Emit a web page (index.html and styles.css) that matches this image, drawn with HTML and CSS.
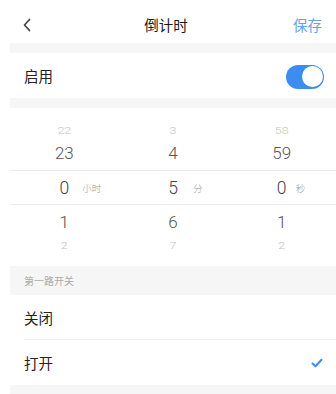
FILE: index.html
```html
<!DOCTYPE html>
<html lang="zh">
<head>
<meta charset="utf-8">
<link rel="stylesheet" href="styles.css">
</head>
<body>
<div class="page">
  <header class="nav">
    <span class="back"><svg width="10" height="14" viewBox="0 0 10 14"><polyline points="7.5,1.5 2.5,7 7.5,12.5" fill="none" stroke="#444" stroke-width="1.7" stroke-linecap="round" stroke-linejoin="round"/></svg></span>
    <span class="title">倒计时</span>
    <span class="save">保存</span>
  </header>
  <div class="gap"></div>
  <div class="row enable">
    <span class="label">启用</span>
    <span class="toggle"><span class="knob"></span></span>
  </div>
  <div class="gap"></div>
  <div class="picker">
    <div class="prow far top"><span>22</span><span>3</span><span>58</span></div>
    <div class="prow near up"><span>23</span><span>4</span><span>59</span></div>
    <div class="prow sel">
      <span class="cell">0<em class="unit u1">小时</em></span>
      <span class="cell">5<em class="unit u2">分</em></span>
      <span class="cell">0<em class="unit u3">秒</em></span>
    </div>
    <div class="prow near down"><span>1</span><span>6</span><span>1</span></div>
    <div class="prow far"><span>2</span><span>7</span><span>2</span></div>
  </div>
  <div class="section">第一路开关</div>
  <div class="row opt divided"><span class="label">关闭</span></div>
  <div class="row opt"><span class="label">打开</span>
    <svg class="check" width="12" height="10" viewBox="0 0 12 10"><polyline points="1.5,5.5 4.5,8.2 10.5,1.8" fill="none" stroke="#3d8cf0" stroke-width="2" stroke-linecap="round" stroke-linejoin="round"/></svg>
  </div>
  <div class="gap end"></div>
</div>
</body>
</html>
```
FILE: styles.css
```css
html, body {
  margin: 0;
  padding: 0;
  background: #fff;
}
body {
  font-family: "Noto Sans CJK SC", "Noto Sans", sans-serif;
  color: #222;
}
.page {
  margin-left: 10px;
  width: 326px;
  overflow: hidden;
}
.nav {
  height: 43px;
  display: flex;
  align-items: center;
  justify-content: space-between;
  padding: 0 14px 0 12px;
  position: relative;
}
.back {
  display: flex;
  align-items: center;
  width: 40px;
  padding-top: 6px;
}
.title {
  font-size: 14.5px;
  font-weight: 400;
  color: #1a1a1a;
  padding-top: 6px;
  margin-left: -12px;
}
.save {
  font-size: 14.5px;
  color: #66a2e6;
  width: 40px;
  text-align: right;
  padding-top: 6px;
}
.gap {
  height: 10px;
  background: #f6f6f6;
}
.gap.end {
  height: 14px;
}
.row {
  height: 45px;
  display: flex;
  align-items: center;
  justify-content: space-between;
  padding: 0 12px 0 14px;
  position: relative;
}
.label {
  font-size: 14.5px;
  color: #222;
}
.toggle {
  width: 38px;
  height: 24px;
  border-radius: 12px;
  background: #3d8cf0;
  position: relative;
  margin-top: 2px;
}
.knob {
  position: absolute;
  right: 1.5px;
  top: 1.5px;
  width: 21px;
  height: 21px;
  border-radius: 50%;
  background: #fff;
}
.picker {
  padding: 12px 0 11px;
}
.prow {
  display: grid;
  grid-template-columns: 1fr 1fr 1fr;
  align-items: center;
  text-align: center;
  font-family: Roboto, "Liberation Sans", sans-serif;
  font-weight: 300;
}
.prow span {
  display: block;
}
.prow.far {
  height: 20px;
  font-size: 12.5px;
  color: #c2c2c2;
  transform: scaleY(0.7);
}
.prow.near {
  height: 26px;
  font-size: 17px;
  color: #555;
}
.prow.up {
  padding-bottom: 4px;
}
.prow.down {
  padding-top: 4px;
}
.prow.sel {
  height: 33px;
  border-top: 1px solid #ececec;
  border-bottom: 1px solid #ececec;
  font-size: 17.5px;
  color: #444;
}
.cell {
  position: relative;
}
.unit {
  position: absolute;
  top: 50%;
  transform: translateY(-50%);
  font-style: normal;
  font-family: "Noto Sans CJK SC", sans-serif;
  font-size: 9.5px;
  color: #999;
  white-space: nowrap;
}
.u1 { left: calc(50% + 18px); }
.u2 { left: calc(50% + 20px); }
.u3 { left: calc(50% + 14px); }
.section {
  height: 29px;
  background: #f6f6f6;
  display: flex;
  align-items: center;
  padding-left: 14px;
  font-size: 10px;
  color: #aaa;
}
.opt.divided::after {
  content: "";
  position: absolute;
  left: 14px;
  right: 0;
  bottom: 0;
  height: 1px;
  background: #efefef;
}
.check {
  margin-right: 1px;
}
```
